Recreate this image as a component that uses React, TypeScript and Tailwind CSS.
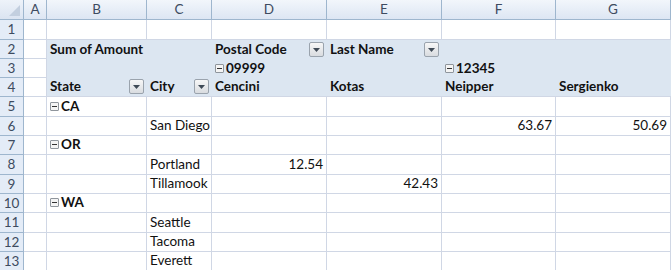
import React from 'react';

type Cell = {
  text?: string;
  bold?: boolean;
  right?: boolean;
  dropdown?: boolean;
  toggle?: boolean;
};

const colWidths = [24, 23, 100, 65, 115, 115, 114, 115];
const rowHeights = [20, 19, 19, 19, 20, 19, 19, 20, 19, 19, 20, 19, 19];
const letters = ['A', 'B', 'C', 'D', 'E', 'F', 'G'];

// cells for columns B..G of each sheet row
const rows: Record<number, Record<string, Cell>> = {
  2: {
    B: { text: 'Sum of Amount', bold: true },
    D: { text: 'Postal Code', bold: true, dropdown: true },
    E: { text: 'Last Name', bold: true, dropdown: true },
  },
  3: {
    D: { text: '09999', bold: true, toggle: true },
    F: { text: '12345', bold: true, toggle: true },
  },
  4: {
    B: { text: 'State', bold: true, dropdown: true },
    C: { text: 'City', bold: true, dropdown: true },
    D: { text: 'Cencini', bold: true },
    E: { text: 'Kotas', bold: true },
    F: { text: 'Neipper', bold: true },
    G: { text: 'Sergienko', bold: true },
  },
  5: { B: { text: 'CA', bold: true, toggle: true } },
  6: {
    C: { text: 'San Diego' },
    F: { text: '63.67', right: true },
    G: { text: '50.69', right: true },
  },
  7: { B: { text: 'OR', bold: true, toggle: true } },
  8: { C: { text: 'Portland' }, D: { text: '12.54', right: true } },
  9: { C: { text: 'Tillamook' }, E: { text: '42.43', right: true } },
  10: { B: { text: 'WA', bold: true, toggle: true } },
  11: { C: { text: 'Seattle' } },
  12: { C: { text: 'Tacoma' } },
  13: { C: { text: 'Everett' } },
};

const DropButton = () => (
  <span className="ml-auto mb-[1px] flex h-[15px] w-[15px] shrink-0 items-center justify-center rounded-[2px] border border-[#9aa3ad] bg-linear-to-b from-[#f7f7f7] to-[#d9dce0]">
    <svg width="7" height="4" viewBox="0 0 7 4">
      <path d="M0 0h7L3.5 4z" fill="#3f4a56" />
    </svg>
  </span>
);

const Toggle = () => (
  <span className="mr-[2px] mb-[4px] flex h-[9px] w-[9px] shrink-0 items-center justify-center rounded-[1px] border border-[#8f959c] bg-[#f4f4f4]">
    <span className="h-[1px] w-[5px] bg-[#333]" />
  </span>
);

function SheetCell({ cell, band, last }: { cell?: Cell; band: boolean; last: boolean }) {
  return (
    <div
      className={
        'flex items-end overflow-visible whitespace-nowrap px-[3px] pb-[1px] ' +
        (band
          ? 'bg-[#dce6f1] ' + (last ? 'border-b border-[#d0d7e5]' : '')
          : 'border-r border-b border-[#d0d7e5] bg-white')
      }
    >
      {cell?.toggle && <Toggle />}
      {cell?.text && (
        <span
          className={
            'leading-[17px] text-[#111] ' +
            (cell.bold ? 'font-bold ' : '') +
            (cell.right ? 'ml-auto' : '')
          }
        >
          {cell.text}
        </span>
      )}
      {cell?.dropdown && <DropButton />}
    </div>
  );
}

export default function App() {
  return (
    <div
      className="grid w-[671px] overflow-hidden bg-white text-[13.5px]"
      style={{ fontFamily: 'Lato, "Liberation Sans", sans-serif' }}
    >
      <div
        className="grid"
        style={{ gridTemplateColumns: colWidths.map((w) => `${w}px`).join(' '), gridTemplateRows: `20px ${rowHeights.map((h) => `${h}px`).join(' ')}` }}
      >
        {/* corner */}
        <div className="relative border-r border-b border-[#9eb6ce] bg-linear-to-b from-[#eef3fa] to-[#dbe4f1]">
          <svg className="absolute right-[3px] bottom-[3px]" width="11" height="11" viewBox="0 0 11 11">
            <path d="M11 0v11H0z" fill="#c3cfdf" />
          </svg>
        </div>
        {letters.map((l) => (
          <div
            key={l}
            className="flex items-center justify-center border-r border-b border-[#9eb6ce] bg-linear-to-b from-[#f2f6fb] to-[#dde6f3] text-[13.5px] text-[#3d4b60]"
          >
            {l}
          </div>
        ))}
        {rowHeights.map((_, i) => {
          const r = i + 1;
          const band = r >= 2 && r <= 4;
          return (
            <React.Fragment key={r}>
              <div className="flex items-center justify-center border-r border-b border-[#9eb6ce] bg-[#e4ecf7] text-[13.5px] text-[#3d4b60]">
                {r}
              </div>
              <div className="border-r border-b border-[#d0d7e5] bg-white" />
              {letters.slice(1).map((l) => (
                <SheetCell key={l} cell={rows[r]?.[l]} band={band} last={r === 4} />
              ))}
            </React.Fragment>
          );
        })}
      </div>
    </div>
  );
}
